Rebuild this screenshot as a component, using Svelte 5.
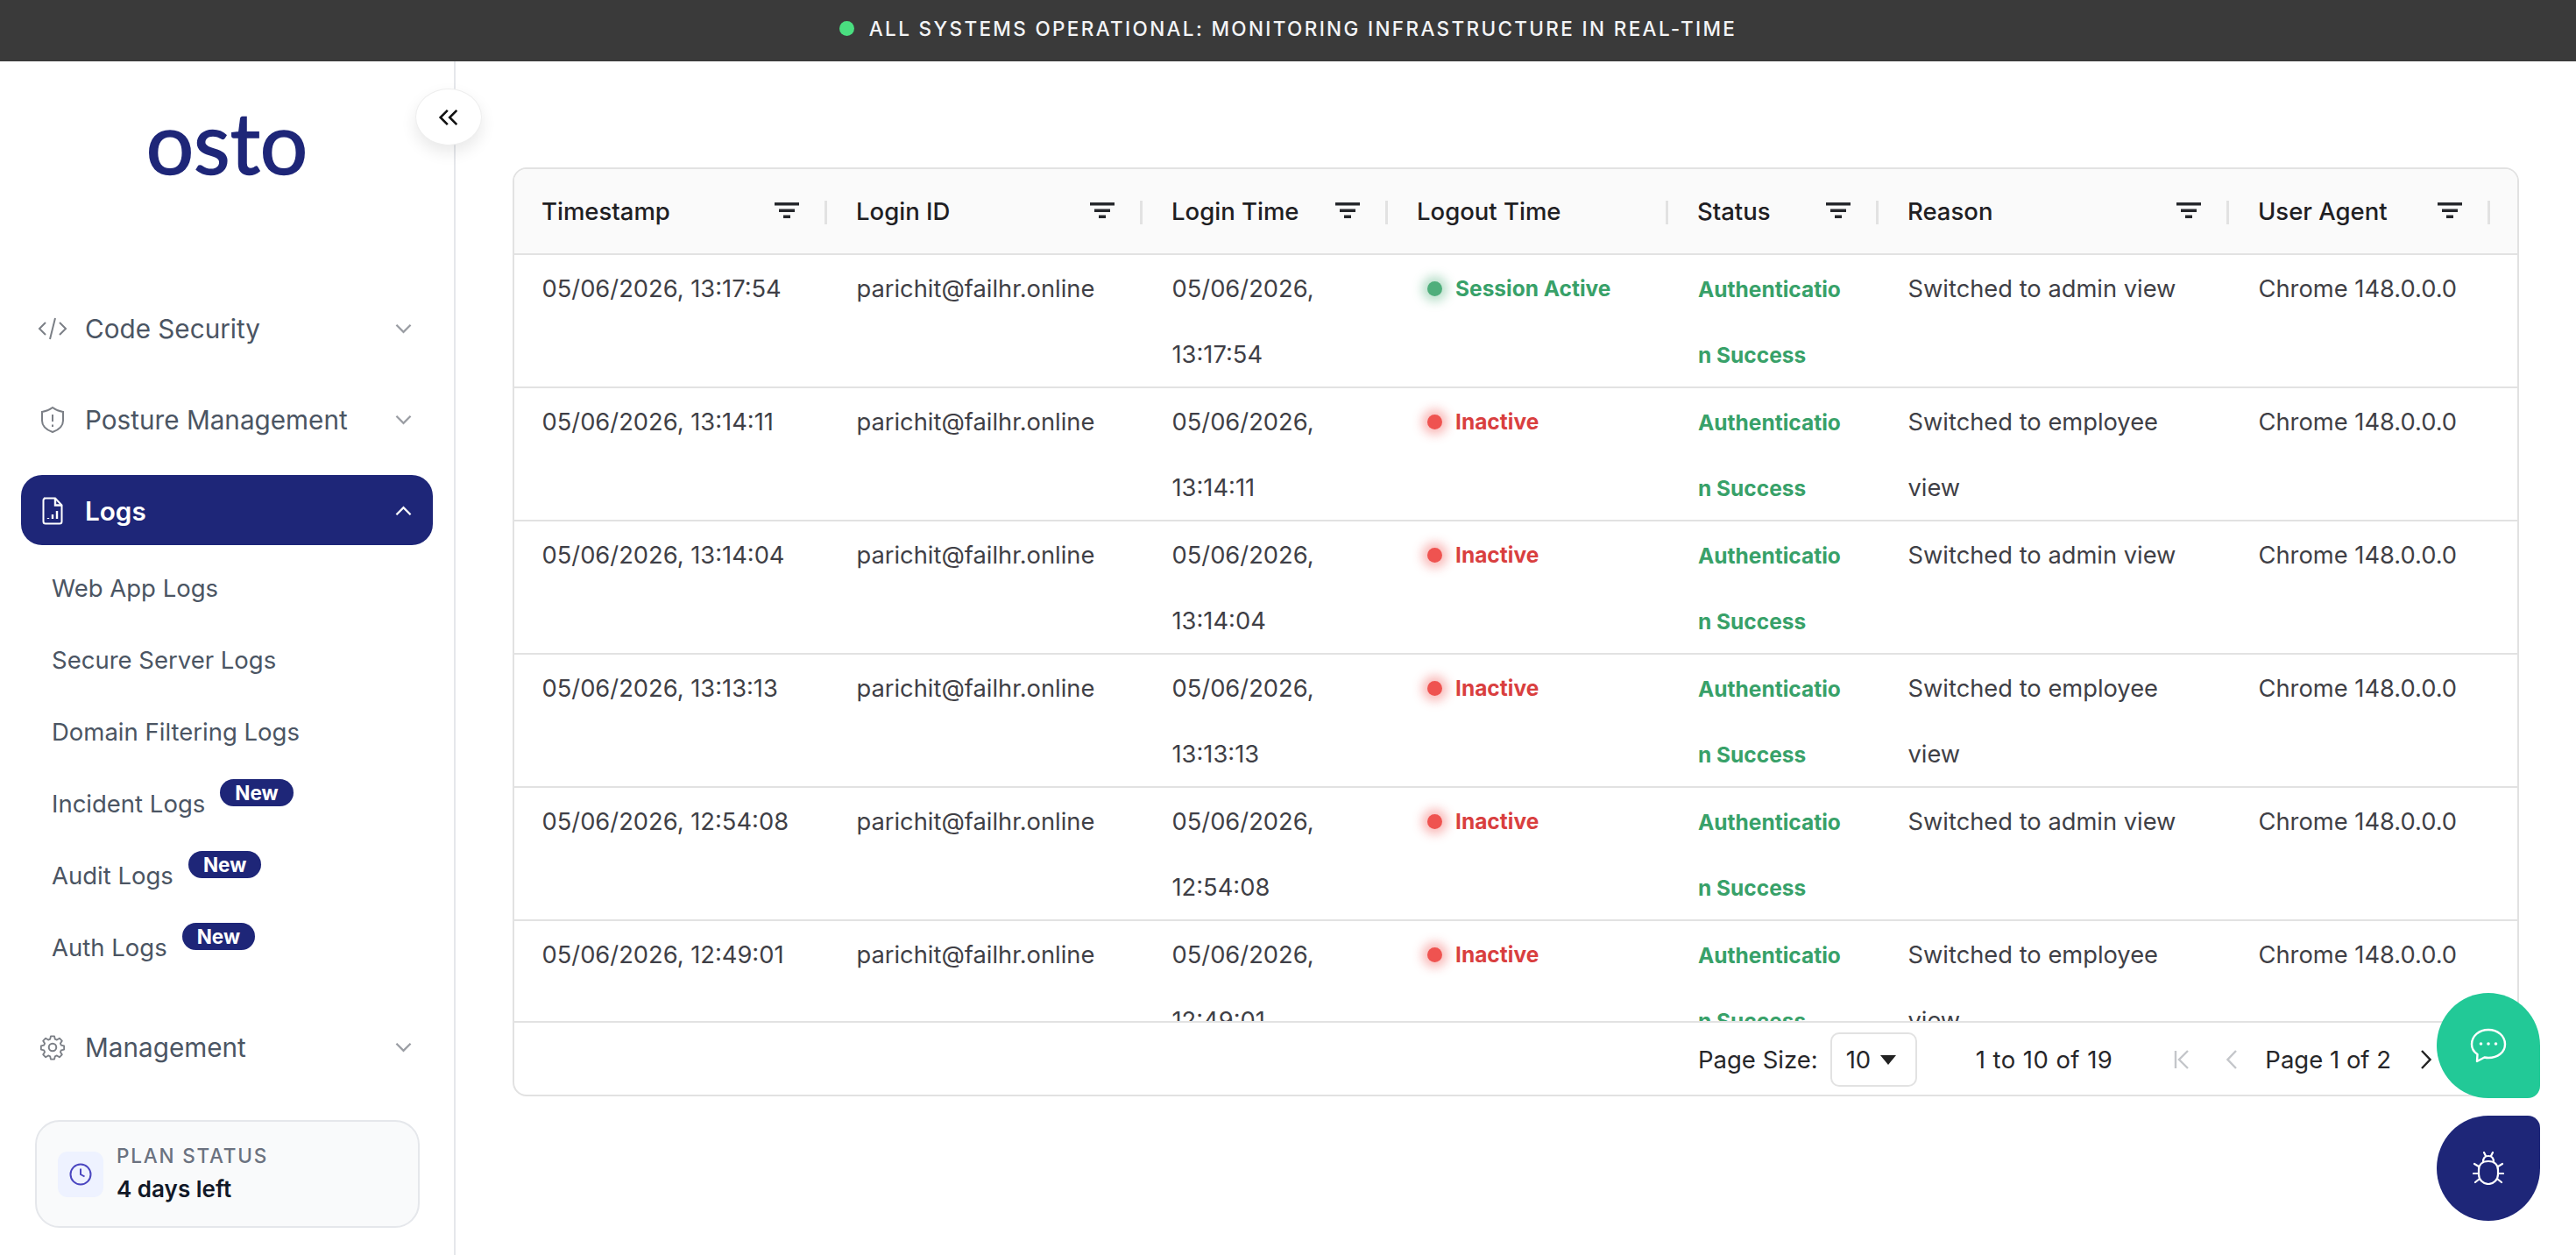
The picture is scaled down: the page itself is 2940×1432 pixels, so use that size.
<script>
  const subItems = [
    { label: "Web App Logs" },
    { label: "Secure Server Logs" },
    { label: "Domain Filtering Logs" },
    { label: "Incident Logs", isNew: true },
    { label: "Audit Logs", isNew: true },
    { label: "Auth Logs", isNew: true },
  ];

  const columns = [
    { title: "Timestamp", filter: true },
    { title: "Login ID", filter: true },
    { title: "Login Time", filter: true },
    { title: "Logout Time", filter: false },
    { title: "Status", filter: true },
    { title: "Reason", filter: true },
    { title: "User Agent", filter: true },
  ];

  const rows = [
    { time: "13:17:54", active: true, view: "admin" },
    { time: "13:14:11", view: "employee" },
    { time: "13:14:04", view: "admin" },
    { time: "13:13:13", view: "employee" },
    { time: "12:54:08", view: "admin" },
    { time: "12:49:01", view: "employee" },
  ];
</script>

<div class="page">
  <header class="banner">
    <span class="banner-dot"></span>
    <span>All systems operational: monitoring infrastructure in real-time</span>
  </header>

  <div class="body">
    <aside class="sidebar">
      <button class="collapse" aria-label="Collapse sidebar">
        <svg viewBox="0 0 24 24" width="28" height="28" fill="none" stroke="#111" stroke-width="2.2">
          <path d="M11 5l-7 7 7 7M20 5l-7 7 7 7" />
        </svg>
      </button>

      <div class="logo">osto</div>

      <nav>
        <div class="nav-row">
          <svg class="nav-icon" viewBox="0 0 34 26" fill="none" stroke="#7b7f86" stroke-width="2">
            <path d="M9 6l-7 7 7 7M25 6l7 7-7 7M20 1l-6 24" />
          </svg>
          <span class="nav-label">Code Security</span>
          <svg class="chevron" viewBox="0 0 20 12" fill="none" stroke="#9a9da3" stroke-width="2.4">
            <path d="M1.500 1.500L10 10l8.500-8.500" />
          </svg>
        </div>

        <div class="nav-row">
          <svg class="nav-icon" viewBox="0 0 34 32" fill="none" stroke="#7b7f86" stroke-width="2">
            <path d="M17 2c4 3 8 4.500 12 5v10c0 6-5 10.500-12 13C10 27.500 5 23 5 17V7c4-.5 8-2 12-5z" />
            <path d="M17 10v8M17 21.500v2.500" />
          </svg>
          <span class="nav-label">Posture Management</span>
          <svg class="chevron" viewBox="0 0 20 12" fill="none" stroke="#9a9da3" stroke-width="2.4">
            <path d="M1.500 1.500L10 10l8.500-8.500" />
          </svg>
        </div>

        <div class="nav-row active">
          <svg class="nav-icon" viewBox="0 0 34 32" fill="none" stroke="#fff" stroke-width="2">
            <path d="M7 1.500h13l7.500 8V28a2.500 2.500 0 0 1-2.500 2.500H9A2.500 2.500 0 0 1 6.500 28V4A2.500 2.500 0 0 1 9 1.500z" />
            <path d="M20 1.500V9.500h7.500M12 25v-1M17 25v-5M22 25v-9" stroke-width="2.400" />
          </svg>
          <span class="nav-label">Logs</span>
          <svg class="chevron" viewBox="0 0 20 12" fill="none" stroke="#fff" stroke-width="2.4">
            <path d="M1.500 10.500L10 2l8.500 8.500" />
          </svg>
        </div>

        <ul class="sub-list">
          {#each subItems as item}
            <li>
              <span>{item.label}</span>
              {#if item.isNew}
                <span class="new-badge">New</span>
              {/if}
            </li>
          {/each}
        </ul>

        <div class="nav-row">
          <svg class="nav-icon" viewBox="0 0 24 24" fill="none" stroke="#7b7f86" stroke-width="1.5" stroke-linejoin="round">
            <path d="M10.300 2.500h3.400l.6 2.700 1.700.7 2.400-1.500 2.400 2.400-1.500 2.400.7 1.700 2.700.6v3.400l-2.700.6-.7 1.700 1.500 2.400-2.400 2.400-2.400-1.500-1.700.7-.6 2.700h-3.400l-.6-2.700-1.700-.7-2.400 1.500-2.400-2.400 1.500-2.400-.7-1.700-2.700-.6v-3.400l2.700-.6.7-1.700-1.500-2.400 2.400-2.400 2.400 1.500 1.700-.7z" transform="translate(12 12) scale(.92) translate(-12 -12.800)" />
            <circle cx="12" cy="12" r="3.200" />
          </svg>
          <span class="nav-label">Management</span>
          <svg class="chevron" viewBox="0 0 20 12" fill="none" stroke="#9a9da3" stroke-width="2.4">
            <path d="M1.500 1.500L10 10l8.500-8.500" />
          </svg>
        </div>
      </nav>

      <div class="plan-card">
        <div class="plan-icon">
          <svg viewBox="0 0 26 26" width="26" height="26" fill="none" stroke="#4a46c0" stroke-width="2">
            <circle cx="13" cy="13" r="11.500" />
            <path d="M13 6.500V13l4.500 2.500" />
          </svg>
        </div>
        <div class="plan-text">
          <div class="plan-title">Plan Status</div>
          <div class="plan-value">4 days left</div>
        </div>
      </div>
    </aside>

    <main>
      <section class="table">
        <div class="row head">
          {#each columns as col}
            <div class="head-cell">
              <span>{col.title}</span>
              {#if col.filter}
                <svg class="filter" viewBox="0 0 28 18" fill="none" stroke="#26282c" stroke-width="3.600">
                  <path d="M0 1.800h28M5 9.200h18M10 16.200h8" />
                </svg>
              {/if}
            </div>
          {/each}
        </div>

        <div class="rows">
          {#each rows as row}
            <div class="row">
              <div class="cell">05/06/2026, {row.time}</div>
              <div class="cell">parichit@failhr.online</div>
              <div class="cell">05/06/2026, {row.time}</div>
              <div class="cell session" class:on={row.active}>
                <span class="dot"></span>
                <span>{row.active ? "Session Active" : "Inactive"}</span>
              </div>
              <div class="cell status">Authentication Success</div>
              <div class="cell">Switched to {row.view} view</div>
              <div class="cell">Chrome 148.0.0.0</div>
            </div>
          {/each}
        </div>

        <footer class="pager">
          <span>Page Size:</span>
          <div class="select">
            <span>10</span>
            <span class="caret"></span>
          </div>
          <span class="count">1 to 10 of 19</span>
          <svg class="first" viewBox="0 0 18 28" width="18" height="28" fill="none" stroke="#c4c6ca" stroke-width="2.400">
            <path d="M2 4v20M16 4L6 14l10 10" />
          </svg>
          <svg class="prev" viewBox="0 0 12 28" width="12" height="28" fill="none" stroke="#c4c6ca" stroke-width="2.400">
            <path d="M11 4L1.500 14 11 24" />
          </svg>
          <span class="page-of">Page 1 of 2</span>
          <svg class="next" viewBox="0 0 12 28" width="12" height="28" fill="none" stroke="#222" stroke-width="2.400">
            <path d="M1 4l9.500 10L1 24" />
          </svg>
        </footer>
      </section>
    </main>
  </div>

  <button class="fab chat" aria-label="Chat">
    <svg viewBox="0 0 42 40" width="42" height="40" fill="none" stroke="#fff" stroke-width="2.400" stroke-linejoin="round">
      <path d="M21 2c10.500 0 19 7 19 16.500S31.500 34 21 34c-1.500 0-3-.2-4.500-.5L8 38l.5-8C4 27 2 23 2 18.500 2 9 10.500 2 21 2z" />
      <circle cx="12.500" cy="18" r="1.800" fill="#fff" stroke="none" />
      <circle cx="21" cy="18" r="1.800" fill="#fff" stroke="none" />
      <circle cx="29.500" cy="18" r="1.800" fill="#fff" stroke="none" />
    </svg>
  </button>
  <button class="fab bug" aria-label="Report a bug">
    <svg viewBox="0 0 36 38" width="36" height="38" fill="none" stroke="#fff" stroke-width="2.200" stroke-linecap="round">
      <path d="M18 11c-7 0-11 4-11 10v5c0 6 5 11 11 11s11-5 11-11v-5c0-6-4-10-11-10z" />
      <path d="M12 12c0-5 2-7 6-7s6 2 6 7M13 1l2 4M23 1l-2 4M7 17l-5-3M29 17l5-3M7 25H1M29 25h6M8 31l-5 4M28 31l5 4" />
    </svg>
  </button>
</div>

<style>
  :global(body) {
    margin: 0;
    background: #fff;
    font-family: Inter, "Liberation Sans", sans-serif;
  }
  .page {
    height: 1432px;
    display: flex;
    flex-direction: column;
    overflow: hidden;
  }
  .banner {
    height: 70px;
    flex: none;
    padding-bottom: 6px;
    box-sizing: border-box;
    background: #3a3a3a;
    color: #f3f4f6;
    display: flex;
    align-items: center;
    justify-content: center;
    gap: 17px;
    font-size: 22.5px;
    font-weight: 500;
    letter-spacing: 2.35px;
    text-transform: uppercase;
  }
  .banner-dot {
    width: 17px;
    height: 17px;
    border-radius: 50%;
    background: #4ade80;
  }
  .body {
    flex: 1;
    display: flex;
    min-height: 0;
  }

  .sidebar {
    position: relative;
    width: 520px;
    flex: none;
    box-sizing: border-box;
    border-right: 2px solid #e5e7eb;
  }
  .collapse {
    position: absolute;
    left: 474px;
    top: 31px;
    width: 76px;
    height: 65px;
    border-radius: 50%;
    border: 1px solid #eee;
    background: #fff;
    box-shadow: 0 8px 18px rgba(0, 0, 0, 0.09);
    display: flex;
    align-items: center;
    justify-content: center;
    padding: 0;
  }
  .logo {
    height: 264px;
    box-sizing: border-box;
    padding-top: 37px;
    text-align: center;
    font-family: Lato, sans-serif;
    font-size: 96px;
    line-height: 110px;
    color: #1e2678;
    -webkit-text-stroke: 1.5px #1e2678;
  }

  nav {
    padding: 0 24px;
    width: 470px;
    display: flex;
    flex-direction: column;
    gap: 24px;
  }
  .nav-row {
    height: 80px;
    box-sizing: border-box;
    padding: 1px 24px 0 19px;
    border-radius: 24px;
    display: flex;
    align-items: center;
    gap: 20px;
    color: #4b5563;
    font-size: 29.7px;
  }
  .nav-row.active {
    background: #1e2678;
    color: #fff;
    font-weight: 600;
  }
  .nav-icon {
    width: 34px;
    height: 32px;
    flex: none;
  }
  .nav-label {
    flex: 1;
  }
  .chevron {
    width: 19px;
    height: 12px;
    flex: none;
  }
  .sub-list {
    list-style: none;
    margin: -17px 0 8px;
    padding: 1px 0 0 35px;
    display: flex;
    flex-direction: column;
  }
  .sub-list li {
    height: 82px;
    display: flex;
    align-items: center;
    gap: 17px;
    color: #4b5563;
    font-size: 27.5px;
  }
  .new-badge {
    background: #1e2678;
    color: #fff;
    font-size: 22.5px;
    font-weight: 700;
    line-height: 31px;
    padding: 0 17px;
    border-radius: 16px;
    margin-bottom: 25px;
  }

  .plan-card {
    margin: 44px 0 0 40px;
    width: 439px;
    height: 123px;
    box-sizing: border-box;
    border: 2px solid #e5e7eb;
    border-radius: 28px;
    background: #f9fafb;
    display: flex;
    align-items: center;
    gap: 15px;
    padding-left: 24px;
  }
  .plan-icon {
    width: 52px;
    height: 52px;
    border-radius: 11px;
    background: #eef2ff;
    display: flex;
    align-items: center;
    justify-content: center;
  }
  .plan-text {
    padding-top: 2px;
  }
  .plan-title {
    color: #6b7280;
    font-size: 22.5px;
    font-weight: 500;
    letter-spacing: 1.8px;
    text-transform: uppercase;
    line-height: 30px;
  }
  .plan-value {
    color: #111827;
    font-size: 26px;
    font-weight: 600;
    line-height: 40px;
    margin-top: 3px;
  }

  main {
    flex: 1;
    padding: 121px 65px 0;
    min-width: 0;
  }
  .table {
    height: 1060px;
    box-sizing: border-box;
    border: 2px solid #e2e2e2;
    border-radius: 16px;
    overflow: hidden;
    display: flex;
    flex-direction: column;
  }
  .row {
    display: grid;
    grid-template-columns: 359px 360px 280px 320px 240px 400px 298px;
    border-bottom: 2px solid #e2e2e2;
    box-sizing: border-box;
    height: 152px;
    flex: none;
  }
  .row.head {
    height: 98px;
    background: #fafafa;
    color: #1f2023;
    font-size: 27.5px;
    font-weight: 500;
  }
  .head-cell {
    position: relative;
    display: flex;
    align-items: center;
    justify-content: space-between;
    padding: 0 34px 0 31px;
  }
  .head-cell::after {
    content: "";
    position: absolute;
    right: 2px;
    top: 36px;
    width: 3px;
    height: 27px;
    background: #e2e2e2;
  }
  .filter {
    width: 28px;
    height: 18px;
    margin-bottom: 2px;
  }
  .rows {
    flex: 1;
    min-height: 0;
    overflow: hidden;
  }
  .cell {
    padding: 1px 32px 0 31.5px;
    font-size: 27.3px;
    line-height: 75px;
    color: #3f3f46;
  }
  .session {
    display: flex;
    align-items: flex-start;
    gap: 15px;
    padding-left: 43px;
    font-size: 24.5px;
    font-weight: 700;
    color: #d93f3f;
  }
  .session.on {
    color: #38a169;
  }
  .dot {
    width: 17px;
    height: 17px;
    margin-top: 29px;
    border-radius: 50%;
    flex: none;
    background: #ef5350;
    box-shadow: 0 0 12px 6px rgba(239, 83, 80, 0.4);
  }
  .session.on .dot {
    background: #4fae7b;
    box-shadow: 0 0 12px 6px rgba(79, 174, 123, 0.4);
  }
  .status {
    padding: 2px 36px 0 32px;
    font-size: 24.5px;
    font-weight: 700;
    color: #38a169;
    word-break: break-all;
  }

  .pager {
    height: 84px;
    flex: none;
    box-sizing: border-box;
    padding: 2px 0 0 1351px;
    display: flex;
    align-items: center;
    border-top: 2px solid #e2e2e2;
    font-size: 27.5px;
    color: #27272a;
    white-space: nowrap;
  }
  .select {
    margin-left: 14px;
    width: 99px;
    height: 62px;
    box-sizing: border-box;
    border: 2px solid #e2e2e2;
    border-radius: 10px;
    display: flex;
    align-items: center;
    gap: 11px;
    padding-left: 16px;
  }
  .caret {
    width: 0;
    height: 0;
    border-left: 9px solid transparent;
    border-right: 9px solid transparent;
    border-top: 11px solid #222;
  }
  .count {
    margin-left: 67px;
    letter-spacing: 0.45px;
  }
  .first {
    margin-left: 70px;
  }
  .prev {
    margin-left: 42px;
  }
  .page-of {
    margin-left: 32px;
  }
  .next {
    margin-left: 34px;
  }

  .fab {
    position: fixed;
    left: 2781px;
    width: 118px;
    height: 120px;
    border: none;
    padding: 0;
    display: flex;
    align-items: center;
    justify-content: center;
  }
  .fab.chat {
    top: 1133px;
    background: #22c997;
    border-radius: 59px 59px 14px 59px / 60px 60px 14px 60px;
  }
  .fab.bug {
    top: 1273px;
    background: #1e2678;
    border-radius: 59px 14px 59px 59px / 60px 14px 60px 60px;
  }
</style>
